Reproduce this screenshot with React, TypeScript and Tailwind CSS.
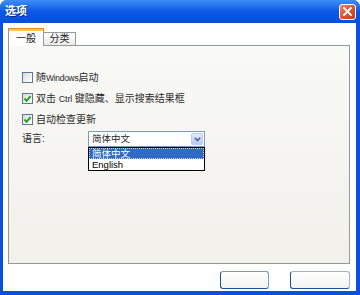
import React from 'react';

const FONT = "font-['Liberation_Sans','Noto_Sans_CJK_SC',sans-serif]";

function CheckBox({ checked }: { checked: boolean }) {
  return (
    <span className="flex h-[11px] w-[11px] shrink-0 items-center justify-center border border-[#5d7699] bg-gradient-to-br from-[#dcdcd6] to-white">
      {checked && (
        <svg width="9" height="9" viewBox="0 0 9 9">
          <polyline points="1.5,4.5 3.6,6.8 7.6,2.2" fill="none" stroke="#21a121" strokeWidth="2" />
        </svg>
      )}
    </span>
  );
}

function OptionRow({ checked, children }: { checked: boolean; children: React.ReactNode }) {
  return (
    <label className="flex h-[21px] items-center gap-[3px] text-[10px] text-[#2a2a2a]">
      <CheckBox checked={checked} />
      <span className="whitespace-nowrap leading-none">{children}</span>
    </label>
  );
}

export default function App() {
  return (
    <div className={`h-[295px] w-[360px] bg-white ${FONT}`}>
      <div className="flex h-full flex-col rounded-t-[7px] bg-[#0b4fdf]">
        {/* title bar */}
        <div className="flex h-[23px] shrink-0 items-center justify-between rounded-t-[7px] bg-gradient-to-b from-[#3d8ff7] via-[#0a58e6] to-[#0450dd] pl-[5px] pr-[4px]">
          <span className="text-[11px] font-bold text-white [text-shadow:1px_1px_0_#0c2c86]">选项</span>
          <button className="flex h-[16px] w-[17px] items-center justify-center rounded-[3px] border border-white bg-gradient-to-br from-[#e98a6c] via-[#d9562f] to-[#c2401c]">
            <svg width="9" height="9" viewBox="0 0 9 9">
              <path d="M1 1 L8 8 M8 1 L1 8" stroke="white" strokeWidth="1.8" strokeLinecap="round" />
            </svg>
          </button>
        </div>

        {/* body */}
        <div className="mb-[4px] ml-[3px] mr-[4px] flex flex-1 flex-col bg-white pl-[5px] pr-[6px] pt-[5px]">
          {/* tabs */}
          <div className="relative z-10 -mb-px flex h-[18px] items-end text-[10px] text-[#222]">
            <div className="flex h-[18px] w-[36px] flex-col border-x border-[#919b9c] bg-white">
              <div className="h-[1px] bg-[#e68b2c]" />
              <div className="h-[2px] bg-[#ffc73c]" />
              <div className="flex flex-1 items-center justify-center leading-none">一般</div>
            </div>
            <div className="mb-px flex h-[13px] w-[32px] items-center justify-center border-r border-t border-[#919b9c] bg-gradient-to-b from-white to-[#ecebe6] leading-none">
              分类
            </div>
          </div>

          {/* tab page */}
          <div className="h-[219px] border border-[#919b9c] bg-gradient-to-b from-[#f9f9f6] to-[#f1f0eb] pl-[13px] pt-[21px]">
            <OptionRow checked={false}>
              随<span className="text-[8.5px] tracking-[-0.3px]">Windows</span>启动
            </OptionRow>
            <OptionRow checked>
              双击 <span className="text-[9px] tracking-[-0.2px]">Ctrl</span> 键隐藏、显示搜索结果框
            </OptionRow>
            <OptionRow checked>自动检查更新</OptionRow>

            <div className="mt-[1px] flex items-center text-[10px] text-[#2a2a2a]">
              <span className="w-[66px] leading-none">语言:</span>
              <div className="relative flex h-[16px] w-[117px] items-center border border-[#7f9db9] bg-white">
                <span className="flex-1 pl-[3px] text-[9.5px] leading-none">简体中文</span>
                <span className="m-[1px] flex h-[12px] w-[12px] items-center justify-center rounded-[2px] border border-[#b8ccf5] bg-gradient-to-b from-[#e4ecfd] to-[#b7cbf8]">
                  <svg width="7" height="5" viewBox="0 0 7 5">
                    <polyline points="0.8,0.8 3.5,3.6 6.2,0.8" fill="none" stroke="#4d6185" strokeWidth="1.5" />
                  </svg>
                </span>

                {/* open drop-down list */}
                <div className="absolute left-[-1px] top-[15px] w-[117px] border border-black bg-white text-[9.5px]">
                  <div className="h-[11px] border border-dotted border-[#c8d8f5] bg-[#316ac5] pl-[2px] leading-[9px] text-white">
                    简体中文
                  </div>
                  <div className="h-[11px] pl-[3px] leading-[11px] text-black">English</div>
                </div>
              </div>
            </div>
          </div>

          {/* dialog buttons */}
          <div className="mt-[7px] flex justify-end gap-[21px]">
            <button className="h-[18px] w-[49px] rounded-[3px] border border-[#7f97c0] border-b-[#24508f] border-l-[#24508f] bg-gradient-to-b from-white to-[#f3f3ef]" />
            <button className="h-[18px] w-[60px] rounded-[3px] border border-[#9fb2d3] border-b-[#24508f] border-l-[#24508f] bg-gradient-to-b from-white to-[#f3f3ef]" />
          </div>
        </div>
      </div>
    </div>
  );
}
